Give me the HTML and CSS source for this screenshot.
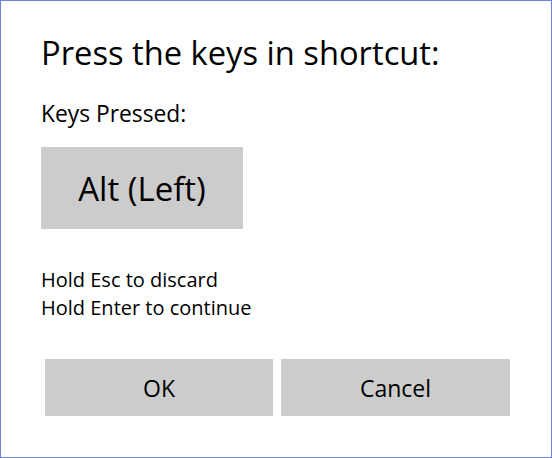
FILE: index.html
```html
<!DOCTYPE html>
<html lang="en">
<head>
    <meta charset="UTF-8">
    <title>Shortcut</title>
    <link rel="stylesheet" href="styles.css">
</head>
<body>
    <div class="dialog">
        <h1 class="title">Press the keys in shortcut:</h1>
        <p class="label">Keys Pressed:</p>
        <div class="keys">
            <div class="key">Alt (Left)</div>
        </div>
        <div class="hints">
            <div>Hold Esc to discard</div>
            <div>Hold Enter to continue</div>
        </div>
        <div class="buttons">
            <button class="btn btn-ok">OK</button>
            <button class="btn btn-cancel">Cancel</button>
        </div>
    </div>
</body>
</html>
```

FILE: styles.css
```css
body {
    margin: 0;
    padding: 0;
    background: #fff;
    font-family: "Open Sans", "Noto Sans", sans-serif;
    color: #000;
}
.dialog {
    width: 552px;
    height: 458px;
    box-sizing: border-box;
    border: 1px solid #6f80e3;
    padding: 33px 40px 0 40px;
}
.title {
    margin: 0;
    font-size: 32.7px;
    line-height: 38px;
    font-weight: normal;
}
.label {
    margin: 28px 0 0 0;
    font-size: 22.8px;
    line-height: 28px;
}
.keys {
    display: flex;
    margin-top: 19px;
}
.key {
    width: 202px;
    height: 82px;
    background: #cccccc;
    display: flex;
    align-items: center;
    justify-content: center;
    font-size: 33px;
}
.hints {
    margin-top: 37px;
    font-size: 20px;
    line-height: 28px;
}
.buttons {
    display: flex;
    gap: 8px;
    margin: 37px 0 0 4px;
}
.btn {
    height: 57px;
    border: none;
    background: #cccccc;
    font-family: inherit;
    font-size: 23px;
    color: #000;
    padding: 0;
}
.btn-ok {
    width: 228px;
}
.btn-cancel {
    width: 229px;
}
```
